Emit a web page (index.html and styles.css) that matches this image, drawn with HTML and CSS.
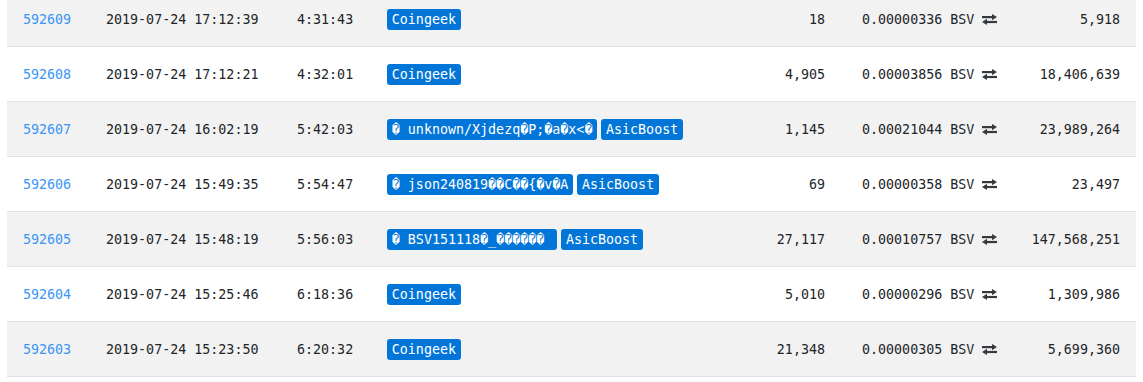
FILE: index.html
```html
<!DOCTYPE html>
<html>
<head>
<meta charset="utf-8">
<link rel="stylesheet" href="styles.css">
</head>
<body>
<table class="blocks">
  <colgroup>
    <col class="c-height"><col class="c-time"><col class="c-age"><col class="c-miner"><col class="c-tx"><col class="c-fee"><col class="c-size">
  </colgroup>
  <tbody>
    <tr class="odd">
      <td><a class="link" href="#">592609</a></td>
      <td>2019-07-24 17:12:39</td>
      <td>4:31:43</td>
      <td><div class="tags"><span class="badge">Coingeek</span></div></td>
      <td class="num">18</td>
      <td class="fee">0.00000336 BSV <svg class="swap" viewBox="0 0 15 11" width="15" height="11"><rect x="0" y="2" width="11" height="2.2"/><polygon points="10,0 15,3.1 10,6.2"/><rect x="4" y="6.9" width="11" height="2.2"/><polygon points="5,4.8 0,8 5,11"/></svg></td>
      <td class="num size">5,918</td>
    </tr>
    <tr>
      <td><a class="link" href="#">592608</a></td>
      <td>2019-07-24 17:12:21</td>
      <td>4:32:01</td>
      <td><div class="tags"><span class="badge">Coingeek</span></div></td>
      <td class="num">4,905</td>
      <td class="fee">0.00003856 BSV <svg class="swap" viewBox="0 0 15 11" width="15" height="11"><rect x="0" y="2" width="11" height="2.2"/><polygon points="10,0 15,3.1 10,6.2"/><rect x="4" y="6.9" width="11" height="2.2"/><polygon points="5,4.8 0,8 5,11"/></svg></td>
      <td class="num size">18,406,639</td>
    </tr>
    <tr class="odd">
      <td><a class="link" href="#">592607</a></td>
      <td>2019-07-24 16:02:19</td>
      <td>5:42:03</td>
      <td><div class="tags"><span class="badge">&#xFFFD; unknown/Xjdezq&#xFFFD;P;&#xFFFD;a&#xFFFD;x&lt;&#xFFFD;</span><span class="badge">AsicBoost</span></div></td>
      <td class="num">1,145</td>
      <td class="fee">0.00021044 BSV <svg class="swap" viewBox="0 0 15 11" width="15" height="11"><rect x="0" y="2" width="11" height="2.2"/><polygon points="10,0 15,3.1 10,6.2"/><rect x="4" y="6.9" width="11" height="2.2"/><polygon points="5,4.8 0,8 5,11"/></svg></td>
      <td class="num size">23,989,264</td>
    </tr>
    <tr>
      <td><a class="link" href="#">592606</a></td>
      <td>2019-07-24 15:49:35</td>
      <td>5:54:47</td>
      <td><div class="tags"><span class="badge">&#xFFFD; json240819&#xFFFD;&#xFFFD;C&#xFFFD;&#xFFFD;{&#xFFFD;v&#xFFFD;A</span><span class="badge">AsicBoost</span></div></td>
      <td class="num">69</td>
      <td class="fee">0.00000358 BSV <svg class="swap" viewBox="0 0 15 11" width="15" height="11"><rect x="0" y="2" width="11" height="2.2"/><polygon points="10,0 15,3.1 10,6.2"/><rect x="4" y="6.9" width="11" height="2.2"/><polygon points="5,4.8 0,8 5,11"/></svg></td>
      <td class="num size">23,497</td>
    </tr>
    <tr class="odd">
      <td><a class="link" href="#">592605</a></td>
      <td>2019-07-24 15:48:19</td>
      <td>5:56:03</td>
      <td><div class="tags"><span class="badge">&#xFFFD; BSV151118&#xFFFD;_&#xFFFD;&#xFFFD;&#xFFFD;&#xFFFD;&#xFFFD;&#xFFFD; </span><span class="badge">AsicBoost</span></div></td>
      <td class="num">27,117</td>
      <td class="fee">0.00010757 BSV <svg class="swap" viewBox="0 0 15 11" width="15" height="11"><rect x="0" y="2" width="11" height="2.2"/><polygon points="10,0 15,3.1 10,6.2"/><rect x="4" y="6.9" width="11" height="2.2"/><polygon points="5,4.8 0,8 5,11"/></svg></td>
      <td class="num size">147,568,251</td>
    </tr>
    <tr>
      <td><a class="link" href="#">592604</a></td>
      <td>2019-07-24 15:25:46</td>
      <td>6:18:36</td>
      <td><div class="tags"><span class="badge">Coingeek</span></div></td>
      <td class="num">5,010</td>
      <td class="fee">0.00000296 BSV <svg class="swap" viewBox="0 0 15 11" width="15" height="11"><rect x="0" y="2" width="11" height="2.2"/><polygon points="10,0 15,3.1 10,6.2"/><rect x="4" y="6.9" width="11" height="2.2"/><polygon points="5,4.8 0,8 5,11"/></svg></td>
      <td class="num size">1,309,986</td>
    </tr>
    <tr class="odd">
      <td><a class="link" href="#">592603</a></td>
      <td>2019-07-24 15:23:50</td>
      <td>6:20:32</td>
      <td><div class="tags"><span class="badge">Coingeek</span></div></td>
      <td class="num">21,348</td>
      <td class="fee">0.00000305 BSV <svg class="swap" viewBox="0 0 15 11" width="15" height="11"><rect x="0" y="2" width="11" height="2.2"/><polygon points="10,0 15,3.1 10,6.2"/><rect x="4" y="6.9" width="11" height="2.2"/><polygon points="5,4.8 0,8 5,11"/></svg></td>
      <td class="num size">5,699,360</td>
    </tr>
  </tbody>
</table>
</body>
</html>
```
FILE: styles.css
```css
html, body {
  margin: 0;
  padding: 0;
  background: #ffffff;
}
body {
  padding: 0 7px;
  font-family: "DejaVu Sans Mono", monospace;
  font-size: 13.333px;
  color: #212529;
}
.blocks {
  width: 1129px;
  table-layout: fixed;
  border-collapse: separate;
  border-spacing: 0;
  margin-top: -9px;
  border-bottom: 1px solid #dee2e6;
}
.c-height { width: 83px; }
.c-time { width: 191px; }
.c-age { width: 90px; }
.c-miner { width: 389px; }
.c-tx { width: 81px; }
.c-fee { width: 174px; }
.c-size { width: 121px; }
.blocks td {
  box-sizing: border-box;
  height: 55px;
  padding: 0 16px;
  border-top: 1px solid #dee2e6;
  vertical-align: middle;
  white-space: nowrap;
  line-height: 21px;
}
.blocks tr.odd td {
  background: #f2f2f2;
}
.link {
  color: #3995f7;
  text-decoration: none;
}
.tags {
  display: flex;
  gap: 4px;
  align-items: center;
}
.badge {
  background: #0275d8;
  color: #ffffff;
  border-radius: 3px;
  padding: 0 4.8px;
  line-height: 21px;
  white-space: pre;
}
.blocks td.num {
  text-align: right;
}
.blocks td.fee {
  padding-left: 21px;
  padding-right: 0;
}
.swap {
  fill: #343a40;
  vertical-align: -1px;
}
```
